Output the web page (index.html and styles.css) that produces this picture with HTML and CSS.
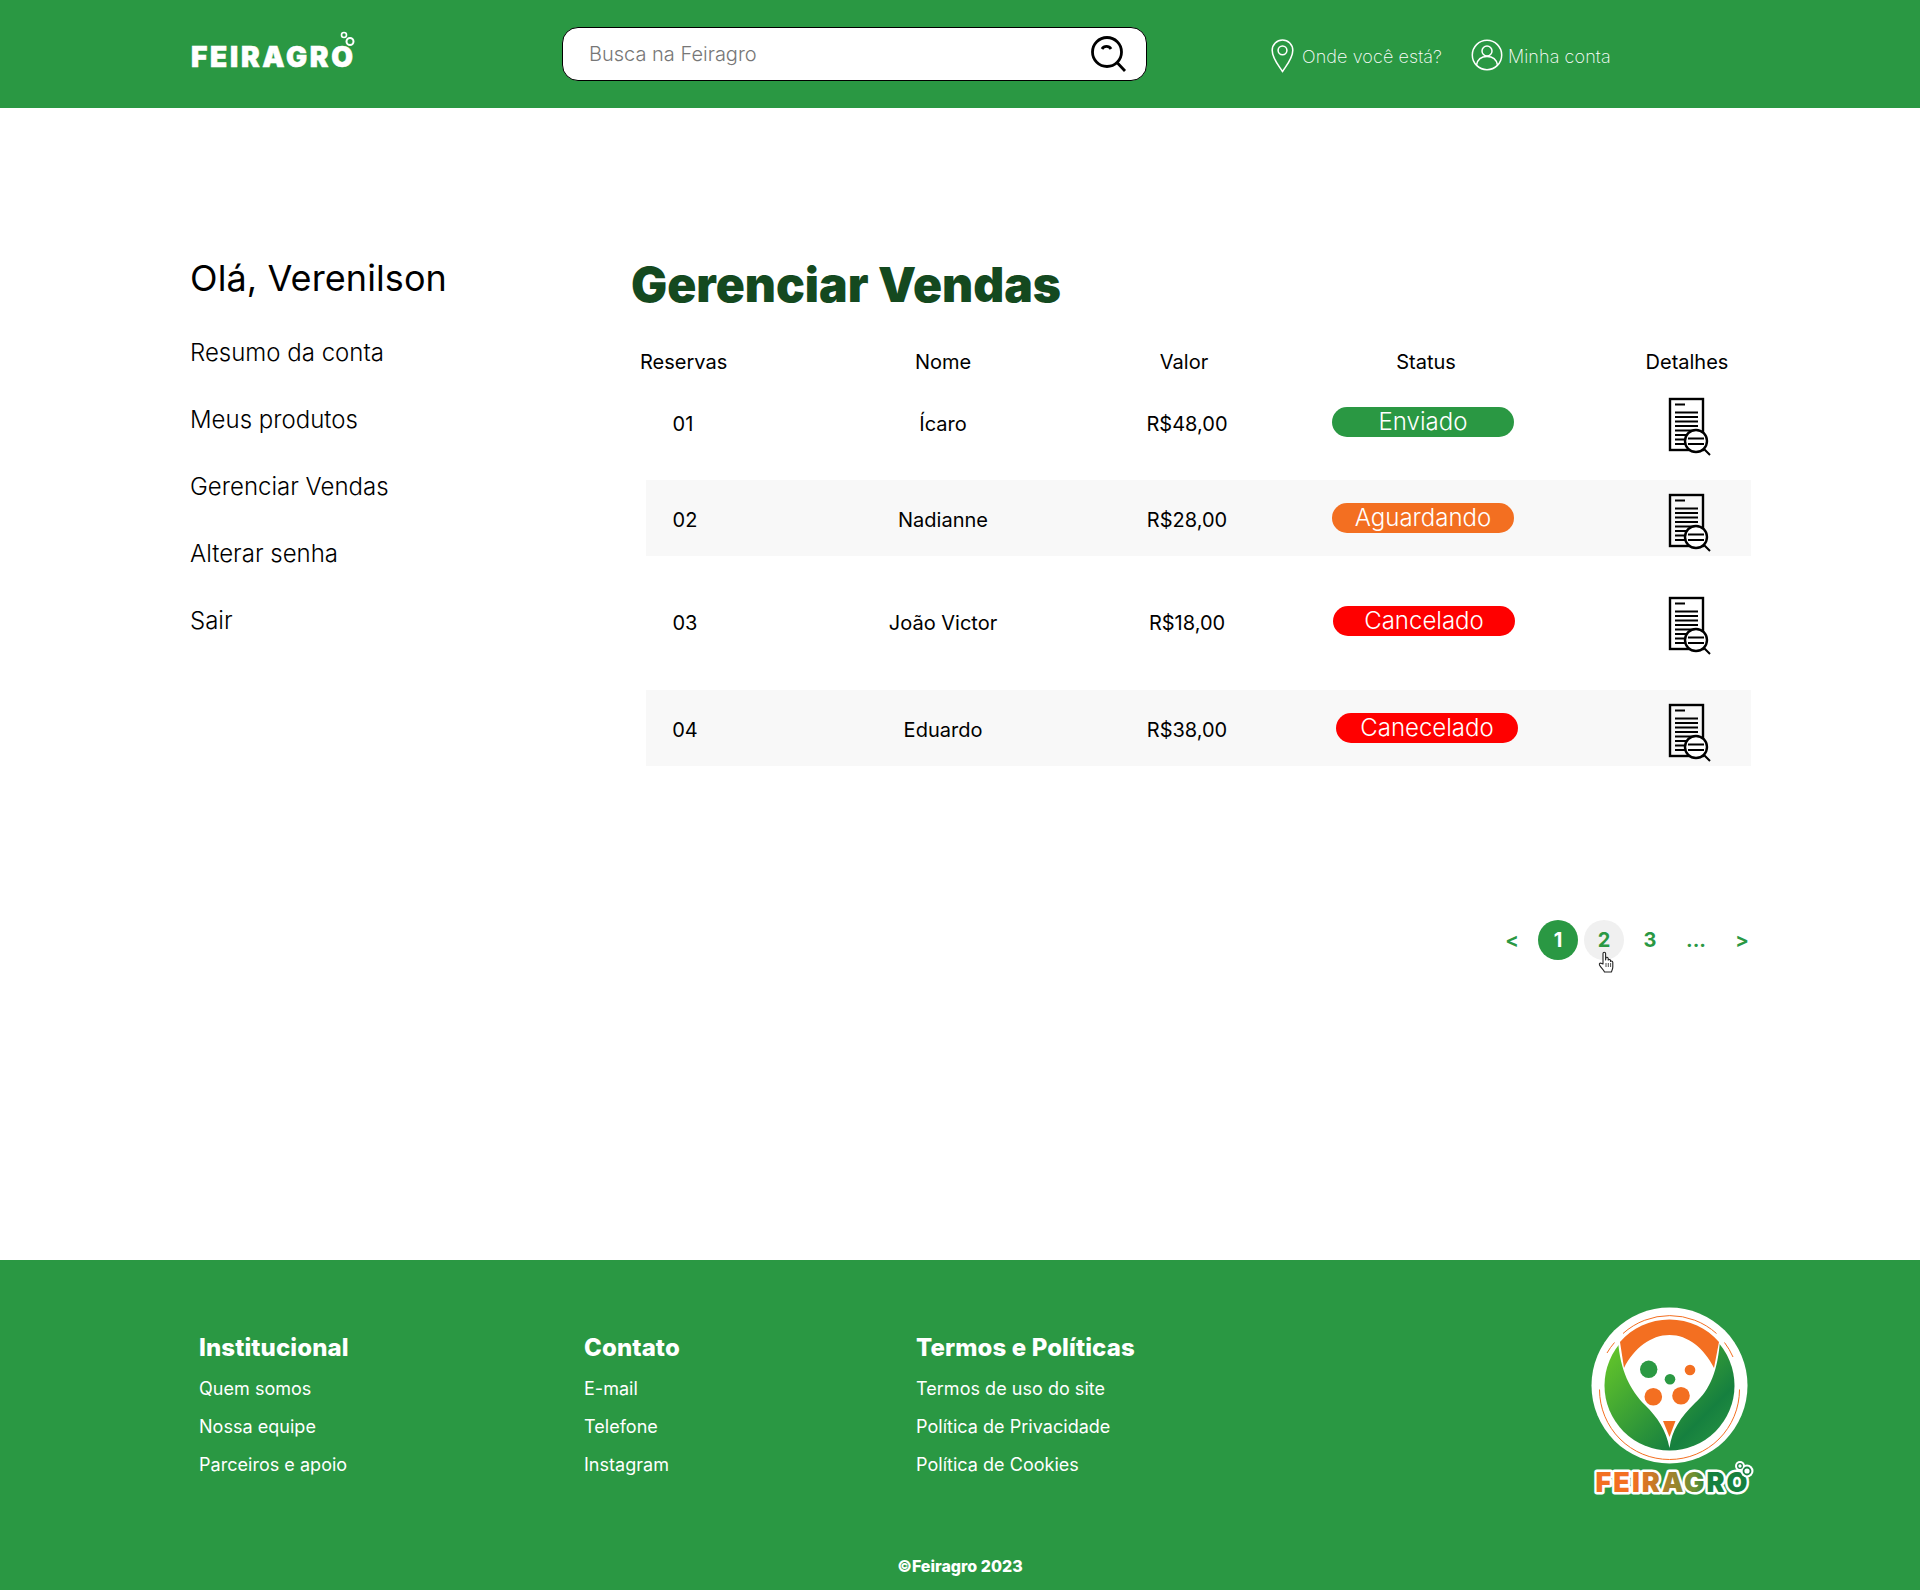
FILE: index.html
```html
<!DOCTYPE html>
<html lang="pt-BR">
<head>
<meta charset="utf-8">
<title>Feiragro - Gerenciar Vendas</title>
<link rel="stylesheet" href="styles.css">
</head>
<body>
<svg class="defs" width="0" height="0" aria-hidden="true">
  <defs>
    <symbol id="doc" viewBox="0 0 46 62">
      <rect x="3" y="3" width="33" height="51" fill="none" stroke="#000" stroke-width="2.400"/>
      <path d="M8 8.500h10M8 16.500h23M8 21h23M8 25.500h23M8 30h23M8 34.500h23M8 39h23M8 43.500h23M8 48h14" stroke="#000" stroke-width="1.900" fill="none"/>
      <circle cx="29" cy="45" r="11" class="doc-lens" stroke="#000" stroke-width="2.400"/>
      <path d="M21 42.500h16M21 48h16M37 53l6 6" stroke="#000" stroke-width="2" fill="none"/>
    </symbol>
    <linearGradient id="leaf" x1="0" y1="0" x2="1" y2="1">
      <stop offset="0.100" stop-color="#67c829"/>
      <stop offset="0.750" stop-color="#16803f"/>
      <stop offset="1" stop-color="#2b9943"/>
    </linearGradient>
    <linearGradient id="word" x1="0" y1="0" x2="1" y2="0">
      <stop offset="0.250" stop-color="#f36f21"/>
      <stop offset="0.650" stop-color="#6f8f33"/>
      <stop offset="0.750" stop-color="#16803f"/>
    </linearGradient>
  </defs>
</svg>

<header class="topbar">
  <svg class="brand" viewBox="0 0 180 50" width="180" height="50" role="img" aria-label="Feiragro">
    <text class="brand-text" x="1" y="42" textLength="162" lengthAdjust="spacing">FEIRAGRO</text>
    <circle cx="154" cy="10" r="2.500" fill="none" stroke="#fff" stroke-width="1.600"/>
    <circle cx="160" cy="16.500" r="3.500" fill="none" stroke="#fff" stroke-width="2"/>
  </svg>
  <div class="search">
    <span class="search-text">Busca na Feiragro</span>
    <svg class="search-icon" viewBox="0 0 38 38" width="38" height="38" aria-hidden="true">
      <circle cx="17" cy="17" r="14.500" fill="none" stroke="#000" stroke-width="2.800"/>
      <path d="M12 14c2-3.500 7-3.500 9 0M27.500 28l7.500 8" fill="none" stroke="#000" stroke-width="2.800"/>
    </svg>
  </div>
  <nav class="topnav">
    <a class="topnav-item">
      <svg viewBox="0 0 24 34" width="25" height="35" aria-hidden="true">
        <path d="M12 32.500C8 26.500 2 20 2 12a10 10 0 0 1 20 0c0 8-6 14.500-10 20.500Z" fill="none" stroke="#fff" stroke-width="1.500"/>
        <circle cx="12" cy="12" r="4.300" fill="none" stroke="#fff" stroke-width="1.500"/>
      </svg>
      <span>Onde você está?</span>
    </a>
    <a class="topnav-item account">
      <svg viewBox="0 0 32 32" width="32" height="32" aria-hidden="true">
        <circle cx="16" cy="16" r="14.700" fill="none" stroke="#fff" stroke-width="1.500"/>
        <circle cx="16" cy="12" r="5" fill="none" stroke="#fff" stroke-width="1.500"/>
        <path d="M5.500 26c1-5.500 5-8.500 10.500-8.500s9.500 3 10.500 8.500" fill="none" stroke="#fff" stroke-width="1.500"/>
      </svg>
      <span>Minha conta</span>
    </a>
  </nav>
</header>

<main class="page">
  <aside class="side">
    <h2 class="greeting">Olá, Verenilson</h2>
    <ul class="side-list">
      <li>Resumo da conta</li>
      <li>Meus produtos</li>
      <li>Gerenciar Vendas</li>
      <li>Alterar senha</li>
      <li>Sair</li>
    </ul>
  </aside>
  <section class="content">
    <h1 class="title">Gerenciar Vendas</h1>
    <div class="sales">
      <div class="row head">
        <span class="c1 head-res">Reservas</span>
        <span class="c2">Nome</span>
        <span class="c3 head-valor">Valor</span>
        <span class="c4 head-status">Status</span>
        <span class="c5 head-det">Detalhes</span>
      </div>
      <div class="row first">
        <span class="c1">01</span>
        <span class="c2">Ícaro</span>
        <span class="c3">R$48,00</span>
        <span class="c4"><b class="pill ok">Enviado</b></span>
        <span class="c5"><svg class="doc"><use href="#doc"/></svg></span>
      </div>
      <div class="row shade">
        <span class="c1 num">02</span>
        <span class="c2">Nadianne</span>
        <span class="c3">R$28,00</span>
        <span class="c4"><b class="pill wait">Aguardando</b></span>
        <span class="c5"><svg class="doc"><use href="#doc"/></svg></span>
      </div>
      <div class="row third">
        <span class="c1 num">03</span>
        <span class="c2">João Victor</span>
        <span class="c3">R$18,00</span>
        <span class="c4"><b class="pill no pill-r3">Cancelado</b></span>
        <span class="c5"><svg class="doc"><use href="#doc"/></svg></span>
      </div>
      <div class="row shade fourth">
        <span class="c1 num">04</span>
        <span class="c2">Eduardo</span>
        <span class="c3">R$38,00</span>
        <span class="c4"><b class="pill no pill-r4">Canecelado</b></span>
        <span class="c5"><svg class="doc"><use href="#doc"/></svg></span>
      </div>
    </div>
    <div class="pager">
      <span class="pg">&lt;</span>
      <span class="pg on">1</span>
      <span class="pg hover">2
        <svg class="hand" viewBox="0 0 18 22" width="18" height="22" aria-hidden="true">
          <path d="M5 13V2.500a1.300 1.300 0 0 1 2.600 0V9l.4-2.500c1.200-.6 2.200 0 2.200 1V9c1-.8 2.200-.5 2.300.6v.8c1-.7 2.300-.3 2.300 1V16c0 2.500-1 3-1.300 5H6.500C5.500 18.500 3 17 1.500 14c-.6-1.500 1-2.500 2-1.500Z" fill="#fff" stroke="#222" stroke-width="1.100" stroke-linejoin="round"/>
          <path d="M8 12v4M10.300 12v4M12.600 12v4" stroke="#222" stroke-width=".8"/>
        </svg>
      </span>
      <span class="pg">3</span>
      <span class="pg">...</span>
      <span class="pg">&gt;</span>
    </div>
  </section>
</main>

<footer class="footer">
  <div class="footer-cols">
    <div class="fcol fcol-a">
      <h3>Institucional</h3>
      <a>Quem somos</a>
      <a>Nossa equipe</a>
      <a>Parceiros e apoio</a>
    </div>
    <div class="fcol fcol-b">
      <h3>Contato</h3>
      <a>E-mail</a>
      <a>Telefone</a>
      <a>Instagram</a>
    </div>
    <div class="fcol fcol-c">
      <h3>Termos e Políticas</h3>
      <a>Termos de uso do site</a>
      <a>Política de Privacidade</a>
      <a>Política de Cookies</a>
    </div>
    <svg class="footer-logo" viewBox="0 0 200 220" width="200" height="220" role="img" aria-label="Feiragro">
      <circle cx="99.500" cy="95.500" r="78" fill="#fff"/>
      <circle cx="99.500" cy="95.500" r="65" fill="url(#leaf)"/>
      <path d="M48 48C62 35 80 29 99.500 29C119 29 137 35 151 48L150 50C148 80 140 100 125 113C110 128 102 140 99.500 158C96 140 88 128 75 115C60 100 50 80 48 50Z" fill="#fff"/>
      <path d="M50 52C62 38 80 29.500 99.500 29.500C119 29.500 137 38 149 52L144 78C134 58 118 45 99.500 45C81 45 64 58 54 78Z" fill="#f36f21"/>
      <path d="M53 43.500A70 70 0 0 1 146.500 43.500M37 63A70 70 0 0 1 44.500 52.500M154.500 52.500A70 70 0 0 1 163 67M29.500 99.500A70 70 0 0 0 169.500 99.500" fill="none" stroke="#f36f21" stroke-width="1"/>
      <circle cx="78.700" cy="79.300" r="8.700" fill="#2b9943"/>
      <circle cx="120" cy="80" r="5.300" fill="#f36f21"/>
      <circle cx="100" cy="89.300" r="5.300" fill="#2b9943"/>
      <circle cx="83.300" cy="106.700" r="8.800" fill="#f36f21"/>
      <circle cx="111" cy="105.700" r="8.800" fill="#f36f21"/>
      <path d="M93 131H105.500L99.500 147Z" fill="#f36f21"/>
      <text class="word word-halo" x="25.500" y="202" textLength="152" lengthAdjust="spacing">FEIRAGRO</text>
      <text class="word" x="25.500" y="202" textLength="152" lengthAdjust="spacing">FEIRAGRO</text>
      <circle cx="170" cy="176" r="5" fill="#fff"/>
      <circle cx="177" cy="181" r="6.500" fill="#fff"/>
      <circle cx="170" cy="176" r="2.300" fill="none" stroke="#16803f" stroke-width="1.300"/>
      <circle cx="177" cy="181" r="3.500" fill="none" stroke="#16803f" stroke-width="1.800"/>
    </svg>
  </div>
  <p class="copy">©Feiragro 2023</p>
</footer>
</body>
</html>
```

FILE: styles.css
```css
* { box-sizing: border-box; }
html, body { margin: 0; padding: 0; }
body {
  font-family: Inter, "Liberation Sans", sans-serif;
  color: #000;
  background: #fff;
  width: 1920px;
}
.defs { display: block; height: 0; }
.doc-lens { fill: #fff; }

.topbar {
  height: 108px;
  background: #2a9843;
  display: flex;
  align-items: center;
  padding-left: 190px;
}
.brand { flex: none; margin-right: 192px; margin-top: -8px; display: block; }
.brand-text { font: 900 28px Inter, sans-serif; fill: #fff; stroke: #fff; stroke-width: 0.6px; }
.search {
  width: 585px;
  height: 54px;
  background: #fff;
  border: 1px solid #000;
  border-radius: 16px;
  display: flex;
  align-items: center;
  justify-content: space-between;
  padding: 0 18px 0 26px;
}
.search-text { font-size: 20px; font-weight: 300; color: #777; }
.search-icon { display: block; }
.topnav { display: flex; margin-left: 123px; gap: 29px; align-items: center; margin-top: 2px; }
.topnav-item {
  display: flex;
  align-items: center;
  gap: 7px;
  font-size: 18px;
  font-weight: 200;
  color: #fff;
  letter-spacing: 0.1px;
}
.topnav-item span { margin-top: 3px; }
.account { gap: 5px; }

.page {
  height: 1152px;
  display: flex;
  padding-left: 190px;
}
.side { width: 441px; flex: none; padding-top: 148px; }
.greeting { margin: 0; font-size: 36px; font-weight: 400; line-height: 44px; letter-spacing: 0.1px; color: #000; }
.side-list { list-style: none; margin: 19px 0 0; padding: 0; font-size: 24px; font-weight: 300; }
.side-list li { height: 67px; line-height: 67px; }

.content { width: 1130px; padding-top: 147px; }
.title { margin: 0; font-size: 48px; font-weight: 900; line-height: 60px; color: #14491f; }
.sales { margin-top: 27px; margin-left: 15px; width: 1105px; font-size: 20px; }
.row { display: flex; align-items: center; height: 76px; text-align: center; }
.row span { display: block; flex: none; }
.head { height: 40px; }
.first { margin-top: 4px; }
.shade { background: #f8f8f8; margin-top: 18px; padding-top: 4px; }
.shade .doc-lens { fill: #f8f8f8; }
.third { margin-top: 29px; }
.fourth { margin-top: 29px; }
.c1 { width: 74px; }
.c2 { width: 200px; margin-left: 123px; }
.c3 { width: 120px; margin-left: 84px; }
.c4 { width: 182px; margin-left: 85px; }
.c5 { width: 120px; margin-left: 112px; }
.num { position: relative; left: 2px; }
.head-res { position: relative; left: -6px; }
.head-valor { position: relative; left: -3px; }
.head-status { position: relative; left: 3px; }
.head-det { position: relative; left: 1px; }
.pill {
  display: block;
  height: 30px;
  line-height: 29px;
  border-radius: 15px;
  color: #fff;
  font-size: 24px;
  font-weight: 300;
  margin-top: -4px;
}
.ok { background: #2a9843; }
.wait { background: #f36f21; }
.no { background: #ff0000; }
.pill-r3 { margin-left: 1px; margin-right: -1px; }
.pill-r4 { margin-left: 4px; margin-right: -4px; }
.doc { display: block; width: 46px; height: 62px; margin: 6px auto 0; transform: translateX(4px); }

.pager {
  display: flex;
  justify-content: flex-end;
  gap: 6px;
  margin-top: 154px;
  margin-right: -1px;
}
.pg {
  position: relative;
  width: 40px;
  height: 40px;
  border-radius: 50%;
  display: flex;
  align-items: center;
  justify-content: center;
  font-size: 20px;
  font-weight: 700;
  color: #2a9843;
}
.on { background: #2a9843; color: #fff; }
.hover { background: #f0f0f0; }
.hand { position: absolute; left: 14px; top: 31px; }

.footer { height: 330px; background: #2a9843; color: #fff; position: relative; }
.footer-cols { display: flex; padding-left: 199px; height: 286px; position: relative; }
.fcol { display: flex; flex-direction: column; padding-top: 72px; }
.fcol h3 { margin: 0 0 6px; font-size: 24px; font-weight: 800; line-height: 32px; letter-spacing: 0.1px; }
.fcol a { font-size: 18px; line-height: 38px; font-weight: 400; letter-spacing: 0.03px; }
.fcol-a { width: 385px; }
.fcol-b { width: 332px; }
.fcol-c { width: 654px; }
.footer-logo { position: absolute; left: 1570px; top: 30px; }
.word { font: 900 27px Inter, sans-serif; fill: url(#word); }
.word-halo { fill: #fff; stroke: #fff; stroke-width: 5px; stroke-linejoin: round; }
.copy { margin: 0; position: absolute; left: 0; right: 0; top: 296px; text-align: center; font-size: 16px; font-weight: 800; line-height: 20px; }
```
